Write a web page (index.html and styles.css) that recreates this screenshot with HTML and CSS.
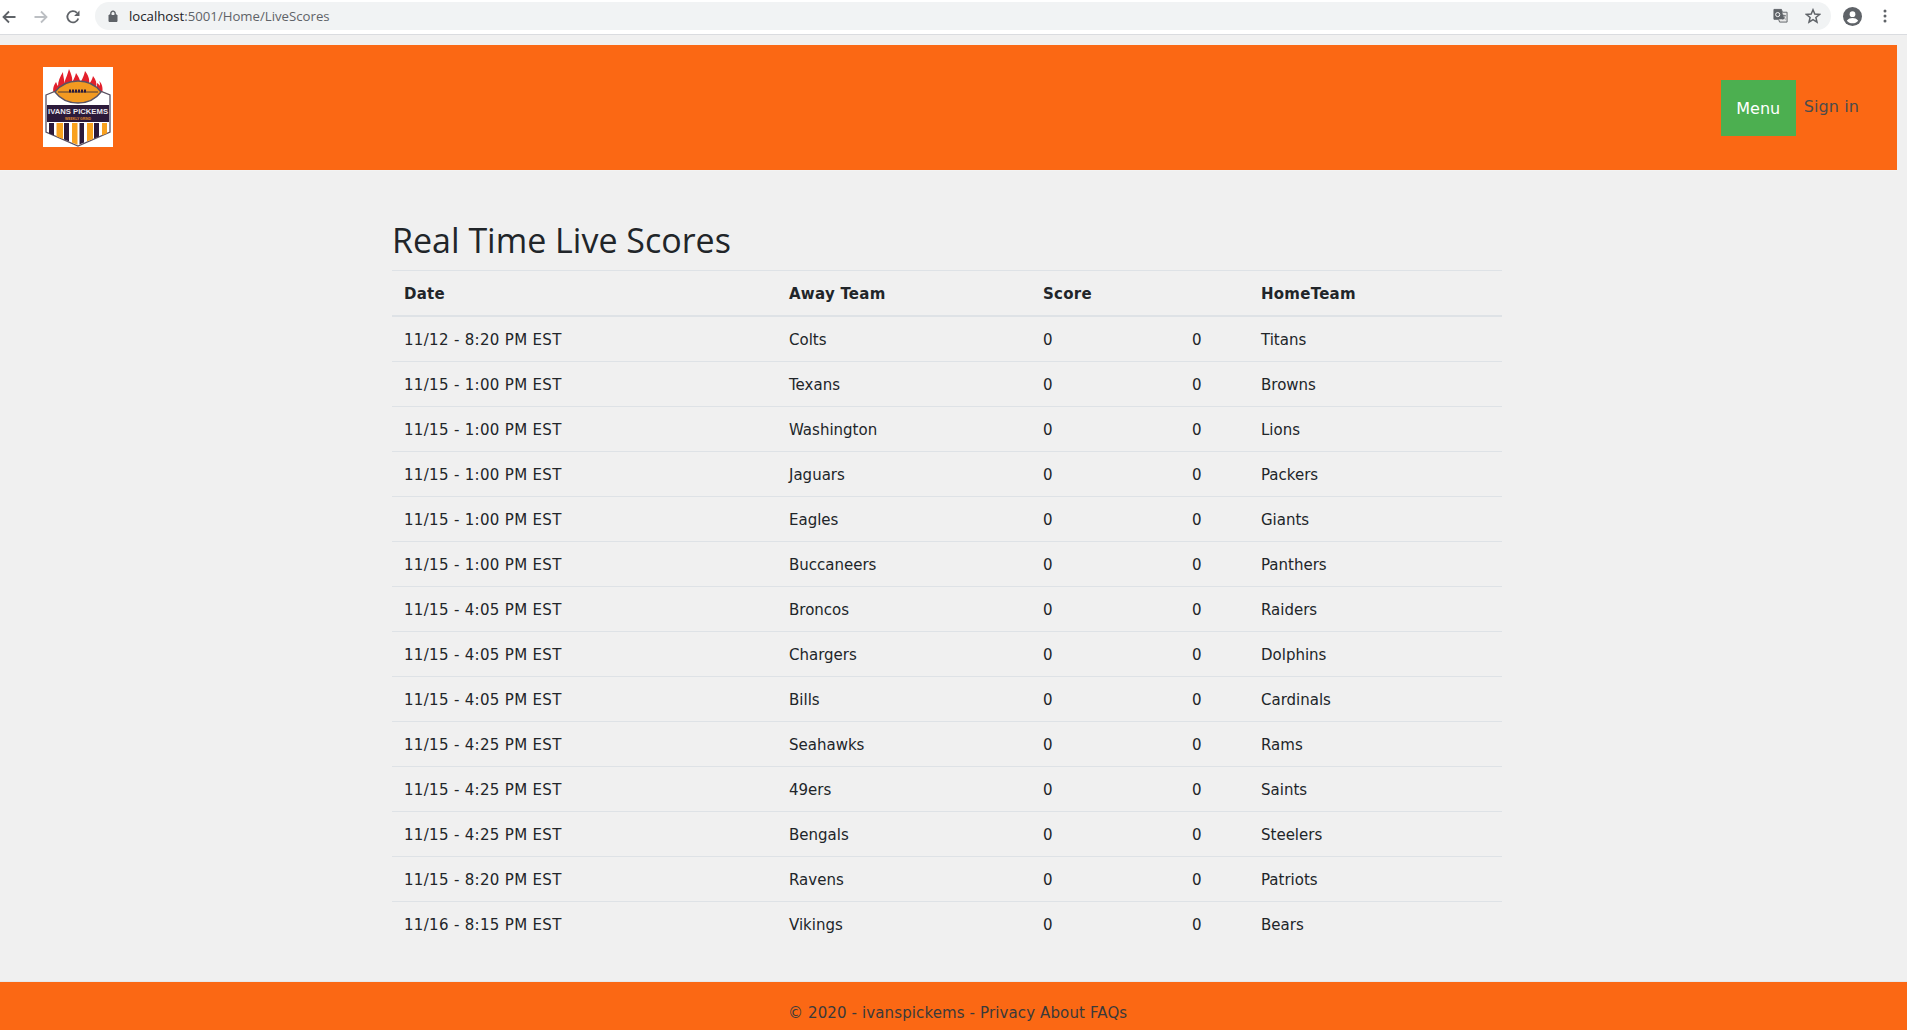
FILE: index.html
```html
<!DOCTYPE html>
<html lang="en">
<head>
<meta charset="utf-8">
<title>Live Scores</title>
<link rel="stylesheet" href="styles.css">
</head>
<body>
<div class="chrome">
  <div class="nav-icons">
    <svg class="ic" viewBox="0 0 16 16"><path d="M14.500 8H2.500M8 2.500 2.500 8 8 13.500" fill="none" stroke="#5f6368" stroke-width="1.800"/></svg>
    <svg class="ic" viewBox="0 0 16 16"><path d="M1.500 8h12M8 2.500 13.500 8 8 13.500" fill="none" stroke="#bcbfc3" stroke-width="1.800"/></svg>
    <svg class="ic" viewBox="0 0 16 16"><path d="M13.300 9.500A5.600 5.600 0 1 1 12 3.900" fill="none" stroke="#5f6368" stroke-width="1.800"/><path d="M14.500 1.500v5.400H9.100z" fill="#5f6368"/></svg>
  </div>
  <div class="omnibox">
    <svg class="lock" viewBox="0 0 10 12"><path d="M1 5h8v6.500H1zM2.600 5V3.300a2.400 2.400 0 0 1 4.800 0V5" fill="#5f6368" stroke="#5f6368" stroke-width="1"/><path d="M3.600 5V3.300a1.400 1.400 0 0 1 2.800 0V5z" fill="#f1f3f4"/></svg>
    <span class="url"><span class="host">localhost</span>:5001/Home/LiveScores</span>
    <span class="spacer"></span>
    <svg class="ic-translate" viewBox="0 0 16 16"><path d="M1 1.500h8l1 3H15v10.500H7l-1-3H1z" fill="#e8e8e8" stroke="#5f6368"/><path d="M1 1.500h8l3 10.500H1z" fill="#5f6368"/><circle cx="5" cy="7" r="2.200" fill="none" stroke="#fff"/><path d="M9.500 8h4M11.500 7v1M10.500 8c.5 2 1.500 3 3 4M13 8c-.5 2-1.500 3-3 4" stroke="#5f6368" stroke-width=".8" fill="none"/></svg>
    <svg class="ic-star" viewBox="0 0 16 16"><path d="M8 1.800 9.800 6.100 14.500 6.500 10.900 9.500 12 14.100 8 11.700 4 14.100 5.100 9.500 1.500 6.500 6.200 6.100z" fill="none" stroke="#5f6368" stroke-width="1.500"/></svg>
  </div>
  <svg class="ic-user" viewBox="0 0 20 20"><circle cx="10" cy="10" r="10" fill="#5f6368"/><circle cx="10" cy="7.500" r="3" fill="#fff"/><path d="M4 14.500c1.500-2 3.800-2.800 6-2.800s4.500.8 6 2.800c-1.400 1.700-3.600 2.700-6 2.700s-4.600-1-6-2.700z" fill="#fff"/></svg>
  <svg class="ic-dots" viewBox="0 0 4 16"><circle cx="2" cy="3" r="1.500" fill="#5f6368"/><circle cx="2" cy="8" r="1.500" fill="#5f6368"/><circle cx="2" cy="13" r="1.500" fill="#5f6368"/></svg>
</div>

<header class="site-header">
  <svg class="logo" viewBox="0 0 70 80">
    <defs>
      <clipPath id="shield-clip"><path d="M5 56H65V66L35 78 5 66z"/></clipPath>
    </defs>
    <rect width="70" height="80" fill="#fff"/>
    <g class="flames">
      <path d="M11 27C9 22 11 18 13 15c1 2 1 3 2 4 0-5 2-9 5-14 0 5 2 8 1 13-1 4-4 7-5 9z"/>
      <path d="M20 22c0-6 3-9 6-20 2 5 4 9 3 13-1 3-3 5-4 8z"/>
      <path d="M29 18c0-4 3-7 4-12 2 3 4 6 4 9 0 2-1 3-2 5z"/>
      <path d="M37 18c1-5 4-8 5-14 3 4 5 8 4 13-1 2-2 3-3 4z"/>
      <path d="M45 21c1-5 4-7 5-12 3 4 4 7 3 11l-2 4z"/>
      <path d="M52 26c1-4 2-6 2-10 1 1 2 1 3 3 0-2 0-3-1-5 4 3 4 9 3 13l-2 2z"/>
    </g>
    <path d="M3 28 13 24H57L67 28V65L35 79 3 65z" fill="#fff" stroke="#5a5262" stroke-width="1.300"/>
    <rect x="4" y="38" width="62" height="17" fill="#2c1a3a"/>
    <text class="logo-name" x="35" y="47" text-anchor="middle" textLength="60" lengthAdjust="spacingAndGlyphs">IVANS PICKEMS</text>
    <text class="logo-sub" x="35" y="53" text-anchor="middle" textLength="26" lengthAdjust="spacingAndGlyphs">WEEKLY GRIND</text>
    <g clip-path="url(#shield-clip)">
      <path d="M6 56h5v22H6zM21 56h5v22h-5zM36.500 56h4.500v22h-4.500zM51 56h5v22h-5z" fill="#2c1a3a"/>
      <path d="M13.500 56H20v22h-6.500zM29 56h5.500v22H29zM44 56h6v22h-6zM59 56h5v22h-5z" fill="#f9a11e"/>
    </g>
    <path d="M12 25C18 17 27 14 35 14s17 3 23 11c-6 8-15 11-23 11s-17-3-23-11z" fill="#f39a21" stroke="#5a5262" stroke-width="1.300"/>
    <path d="M15 25H55" stroke="#4a3a3a" stroke-width="1.200"/>
    <path d="M26 24H44" stroke="#2c1a3a" stroke-width="3" stroke-dasharray="2 1"/>
  </svg>
  <nav class="site-nav">
    <a class="menu-btn">Menu</a>
    <a class="signin">Sign in</a>
  </nav>
</header>

<main class="container">
  <h1 class="title">Real Time Live Scores</h1>
  <table class="scores">
    <colgroup>
      <col class="c-date"><col class="c-away"><col class="c-s1"><col class="c-s2"><col class="c-home">
    </colgroup>
    <thead>
      <tr><th>Date</th><th>Away Team</th><th>Score</th><th></th><th>HomeTeam</th></tr>
    </thead>
    <tbody>
      <tr><td class="when">11/12 - 8:20 PM EST</td><td>Colts</td><td>0</td><td>0</td><td>Titans</td></tr>
      <tr><td class="when">11/15 - 1:00 PM EST</td><td>Texans</td><td>0</td><td>0</td><td>Browns</td></tr>
      <tr><td class="when">11/15 - 1:00 PM EST</td><td>Washington</td><td>0</td><td>0</td><td>Lions</td></tr>
      <tr><td class="when">11/15 - 1:00 PM EST</td><td>Jaguars</td><td>0</td><td>0</td><td>Packers</td></tr>
      <tr><td class="when">11/15 - 1:00 PM EST</td><td>Eagles</td><td>0</td><td>0</td><td>Giants</td></tr>
      <tr><td class="when">11/15 - 1:00 PM EST</td><td>Buccaneers</td><td>0</td><td>0</td><td>Panthers</td></tr>
      <tr><td class="when">11/15 - 4:05 PM EST</td><td>Broncos</td><td>0</td><td>0</td><td>Raiders</td></tr>
      <tr><td class="when">11/15 - 4:05 PM EST</td><td>Chargers</td><td>0</td><td>0</td><td>Dolphins</td></tr>
      <tr><td class="when">11/15 - 4:05 PM EST</td><td>Bills</td><td>0</td><td>0</td><td>Cardinals</td></tr>
      <tr><td class="when">11/15 - 4:25 PM EST</td><td>Seahawks</td><td>0</td><td>0</td><td>Rams</td></tr>
      <tr><td class="when">11/15 - 4:25 PM EST</td><td>49ers</td><td>0</td><td>0</td><td>Saints</td></tr>
      <tr><td class="when">11/15 - 4:25 PM EST</td><td>Bengals</td><td>0</td><td>0</td><td>Steelers</td></tr>
      <tr><td class="when">11/15 - 8:20 PM EST</td><td>Ravens</td><td>0</td><td>0</td><td>Patriots</td></tr>
      <tr><td class="when">11/16 - 8:15 PM EST</td><td>Vikings</td><td>0</td><td>0</td><td>Bears</td></tr>
    </tbody>
  </table>
</main>

<footer class="site-footer">
  <span>© 2020 - ivanspickems - Privacy About FAQs</span>
</footer>
</body>
</html>
```
FILE: styles.css
```css
html, body {
  margin: 0;
  height: 1030px;
  overflow: hidden;
}
body {
  background: #f0f0f0;
  font-family: "DejaVu Sans", Verdana, sans-serif;
  font-size: 15px;
  color: #212529;
  display: flex;
  flex-direction: column;
}
.chrome {
  height: 34px;
  background: #fff;
  border-bottom: 1px solid #dadce0;
  display: flex;
  align-items: center;
  padding-left: 1px;
  flex: none;
}
.nav-icons {
  display: flex;
  gap: 16px;
  width: 94px;
}
.ic { width: 16px; height: 16px; }
.omnibox {
  width: 1736px;
  height: 28px;
  margin-top: -3px;
  background: #f1f3f4;
  border-radius: 14px;
  display: flex;
  align-items: center;
  padding-left: 13px;
  padding-right: 10px;
  box-sizing: border-box;
}
.lock { width: 10px; height: 12px; margin-right: 11px; }
.url {
  font-family: "Open Sans", "Liberation Sans", sans-serif;
  font-size: 13.200px;
  color: #5f6368;
}
.host { color: #202124; }
.spacer { flex: 1; }
.ic-translate { width: 15px; height: 15px; margin-right: 17px; }
.ic-star { width: 16px; height: 16px; }
.ic-user { width: 19px; height: 19px; margin-left: 12px; margin-top: -2px; }
.ic-dots { width: 4px; height: 16px; margin-left: 21px; margin-top: -2px; }
.site-header {
  margin-top: 10px;
  width: 1897px;
  height: 126px;
  flex: none;
  background: #fb6814;
  border-bottom: 1px solid #f3f3f3;
  box-sizing: border-box;
  display: flex;
  align-items: center;
  justify-content: space-between;
  padding: 0 38px 0 43px;
}
.logo { width: 70px; height: 80px; display: block; margin-top: -2px; }
.flames { fill: #e3202c; }
.logo-name {
  font-family: "Liberation Sans", sans-serif;
  font-weight: 700;
  font-size: 8px;
  fill: #e9e6ec;
}
.logo-sub {
  font-family: "Liberation Sans", sans-serif;
  font-weight: 700;
  font-size: 3px;
  fill: #e08a2a;
}
.site-nav {
  display: flex;
  align-items: center;
  gap: 8px;
}
.menu-btn {
  width: 75px;
  height: 56px;
  background: #4caf50;
  color: #fff;
  display: flex;
  align-items: center;
  justify-content: center;
  font-size: 16px;
  margin-top: 1px;
}
.signin {
  color: #4b4b4b;
  font-size: 16px;
  letter-spacing: 0.1px;
  margin-top: -3px;
}
.container {
  width: 1110px;
  margin-left: 392px;
  flex: 1;
}
.title {
  margin: 0;
  padding-top: 43px;
  height: 56px;
  font-family: "Open Sans", sans-serif;
  font-weight: 400;
  font-size: 34px;
  line-height: 52px;
  color: #212529;
}
.scores {
  width: 1110px;
  border-collapse: collapse;
  table-layout: fixed;
}
.c-date { width: 385px; }
.c-away { width: 254px; }
.c-s1 { width: 149px; }
.c-s2 { width: 69px; }
.c-home { width: 253px; }
.scores th, .scores td {
  padding: 2px 0 0 12px;
  height: 42px;
  text-align: left;
  border-top: 1px solid #dee2e6;
}
.scores thead th {
  border-bottom: 2px solid #dee2e6;
  font-weight: 700;
  height: 42px;
  letter-spacing: 0.25px;
}
.scores .when { letter-spacing: 0.32px; }
.site-footer {
  flex: none;
  height: 49px;
  background: #fb6814;
  border-top: 1px solid #e8e8e8;
  box-sizing: border-box;
  padding: 20px 0 0 788px;
  color: #3a3a3a;
  font-size: 15px;
  letter-spacing: 0.12px;
  line-height: 22px;
}
```
